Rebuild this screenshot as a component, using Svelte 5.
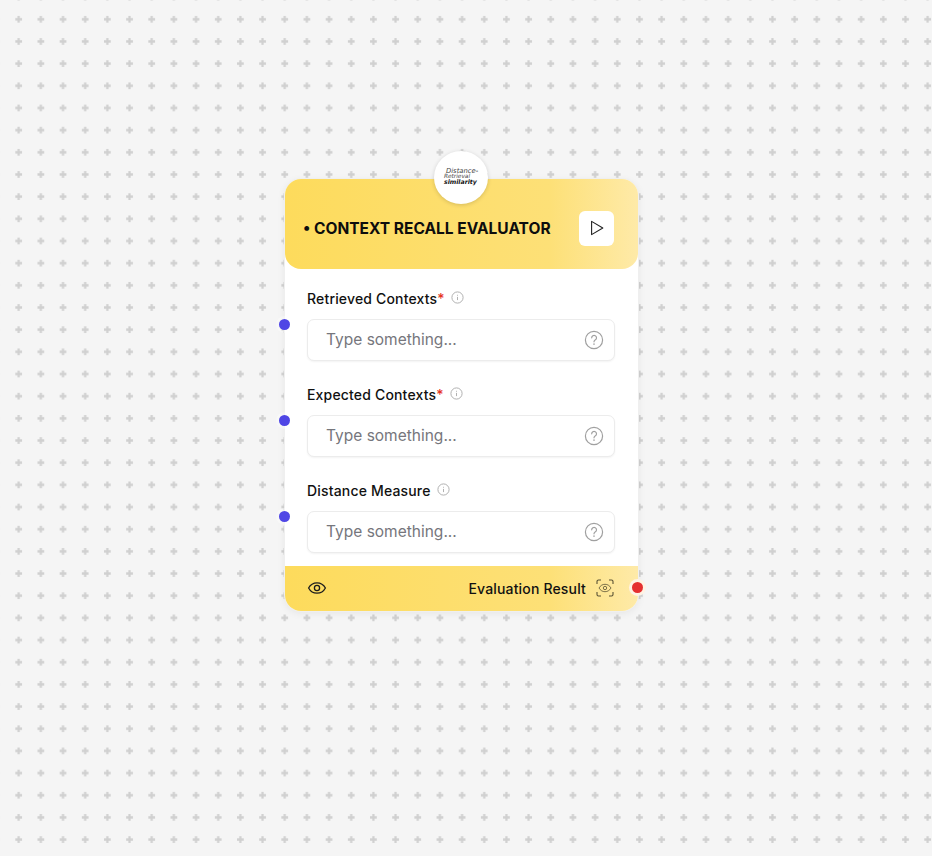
<script>
  const fields = [
    { label: 'Retrieved Contexts', required: true },
    { label: 'Expected Contexts', required: true },
    { label: 'Distance Measure', required: false }
  ];
</script>

<div class="canvas">
  <svg class="dots" width="932" height="856" aria-hidden="true">
    <defs>
      <pattern id="plus" x="7.6" y="8.2" width="22.17" height="22.17" patternUnits="userSpaceOnUse">
        <path d="M11.08 7.700v6.800M7.700 11.080h6.800" stroke="#d0d0d0" stroke-width="2.200" fill="none" />
      </pattern>
    </defs>
    <rect width="932" height="856" fill="url(#plus)" />
  </svg>

  <div class="node">
    <div class="logo">
      <span class="l1">Distance-</span>
      <span class="l2">Retrieval</span>
      <span class="l3">similarity</span>
    </div>

    <header class="head">
      <h1>• CONTEXT RECALL EVALUATOR</h1>
      <button class="play" aria-label="Run">
        <svg width="16" height="16" viewBox="0 0 16 16" fill="none" stroke="#222" stroke-width="1.100" stroke-linejoin="round">
          <path d="M2.600 1.400v13.200L13.800 8z" />
        </svg>
      </button>
    </header>

    <div class="body">
      {#each fields as f}
        <div class="field">
          <div class="label">
            <span>{f.label}</span>{#if f.required}<span class="req">*</span>{/if}
            <svg class="info" width="13" height="13" viewBox="0 0 13 13" fill="none" stroke="#a8a8a8" stroke-width="0.900">
              <circle cx="6.500" cy="6.500" r="5.600" />
              <path d="M6.500 5.900v3.200M6.500 3.800v.900" />
            </svg>
          </div>
          <div class="input">
            <span class="ph">Type something...</span>
            <svg width="20" height="20" viewBox="0 0 20 20" fill="none" stroke="#a0a0a0" stroke-width="1.200" stroke-linecap="round">
              <circle cx="10" cy="10" r="8.600" />
              <path d="M7.700 7.800a2.400 2.400 0 1 1 3.700 2c-.9.600-1.400 1-1.400 2" />
              <path d="M10 14.100v.1" stroke-width="1.500" />
            </svg>
          </div>
          <span class="handle in"></span>
        </div>
      {/each}
    </div>

    <footer class="foot">
      <svg width="20" height="20" viewBox="0 0 20 20" fill="none" stroke="#1c1c1c" stroke-width="1.300">
        <path d="M1.600 10C3.400 6.600 6.400 4.800 10 4.800s6.600 1.800 8.400 5.200c-1.800 3.400-4.800 5.200-8.400 5.200S3.400 13.400 1.600 10z" />
        <circle cx="10" cy="10" r="2.600" />
      </svg>
      <div class="result">
        <span>Evaluation Result</span>
        <svg width="18" height="18" viewBox="0 0 18 18" fill="none" stroke="#5a5335" stroke-width="1.100">
          <path d="M1 5V2.500A1.500 1.500 0 0 1 2.500 1H5M13 1h2.500A1.500 1.500 0 0 1 17 2.500V5M17 13v2.500a1.500 1.500 0 0 1-1.500 1.500H13M5 17H2.500A1.500 1.500 0 0 1 1 15.500V13" />
          <path d="M3 9c1.500-2.500 3.500-3.700 6-3.700s4.500 1.200 6 3.700c-1.500 2.500-3.500 3.700-6 3.700S4.500 11.500 3 9z" stroke-width="0.800" />
          <circle cx="9" cy="9" r="1.700" stroke-width="0.800" />
        </svg>
      </div>
      <span class="handle out"></span>
    </footer>
  </div>
</div>

<style>
  :global(body) {
    margin: 0;
    background: #f5f5f5;
  }
  .canvas {
    position: relative;
    width: 932px;
    height: 856px;
    overflow: hidden;
    background: #f5f5f5;
    font-family: Inter, "Liberation Sans", sans-serif;
    color: #111;
  }
  .dots {
    position: absolute;
    inset: 0;
  }
  .node {
    position: absolute;
    left: 285px;
    top: 179px;
    width: 353px;
    height: 432px;
    display: flex;
    flex-direction: column;
    background: #fff;
    border-radius: 16px;
    box-shadow: 0 0 0 1px #efefef, 0 2px 8px rgba(0, 0, 0, 0.07);
  }
  .logo {
    position: absolute;
    z-index: 2;
    left: 149px;
    top: -28px;
    width: 54px;
    height: 53px;
    border-radius: 50%;
    background: #fff;
    box-shadow: 0 1px 4px rgba(0, 0, 0, 0.16);
    font-family: "DejaVu Sans", sans-serif;
    font-style: italic;
    line-height: 7px;
    color: #111;
  }
  .logo span {
    position: absolute;
    white-space: nowrap;
  }
  .l1 {
    left: 12px;
    top: 17px;
    color: #444;
    font-size: 6.800px;
  }
  .l2 {
    left: 10px;
    top: 22px;
    color: #444;
    font-size: 5.800px;
  }
  .l3 {
    left: 10px;
    top: 27px;
    font-weight: 700;
    font-size: 6.200px;
  }
  .head {
    height: 90px;
    box-sizing: border-box;
    padding: 33px 24px 24px 18px;
    display: flex;
    align-items: center;
    justify-content: space-between;
    border-radius: 16px;
    background: linear-gradient(90deg, #fddb5c 0%, #fde077 75%, #feeaa8 100%);
  }
  h1 {
    margin: 0;
    font-size: 15.500px;
    font-weight: 700;
    line-height: 20px;
    color: #0d0d0d;
    white-space: nowrap;
  }
  .play {
    width: 35px;
    height: 35px;
    margin-top: -1px;
    padding: 0;
    border: 0;
    border-radius: 6px;
    background: #fff;
    display: flex;
    align-items: center;
    justify-content: center;
  }
  .body {
    flex: 1;
    padding: 20px 23px 0 22px;
    display: flex;
    flex-direction: column;
    gap: 24px;
  }
  .field {
    position: relative;
  }
  .label {
    height: 20px;
    display: flex;
    align-items: center;
    font-size: 14px;
    font-weight: 500;
    line-height: 20px;
    letter-spacing: 0.17px;
    color: #111;
  }
  .req {
    color: #e5341f;
  }
  .info {
    margin-left: 6px;
    margin-top: -3px;
  }
  .input {
    margin-top: 10px;
    height: 42px;
    box-sizing: border-box;
    padding: 0 10px 2px 18px;
    display: flex;
    align-items: center;
    justify-content: space-between;
    background: #fff;
    border: 1px solid #ececec;
    border-radius: 7px;
    box-shadow: 0 1px 2px rgba(0, 0, 0, 0.05);
  }
  .input svg {
    margin-top: 2px;
  }
  .ph {
    font-size: 15.500px;
    color: #76767c;
  }
  .handle {
    position: absolute;
    width: 11px;
    height: 11px;
    border-radius: 50%;
    box-shadow: 0 0 0 3px rgba(255, 255, 255, 0.35);
  }
  .in {
    left: -28px;
    top: 29.500px;
    background: #4f46e5;
  }
  .foot {
    position: relative;
    height: 45px;
    box-sizing: border-box;
    padding: 0 11px 1px 22px;
    display: flex;
    align-items: center;
    justify-content: space-between;
    border-radius: 0 0 16px 16px;
    background: linear-gradient(90deg, #fddb5c 0%, #fde077 75%, #feeaa8 100%);
  }
  .result {
    display: flex;
    align-items: center;
    gap: 10px;
    margin-right: 13px;
    font-size: 14px;
    font-weight: 500;
    letter-spacing: 0.17px;
    color: #111;
  }
  .out {
    right: -5px;
    top: 16px;
    background: #e53030;
    box-shadow: 0 0 0 3px #fff3e4;
  }
</style>
